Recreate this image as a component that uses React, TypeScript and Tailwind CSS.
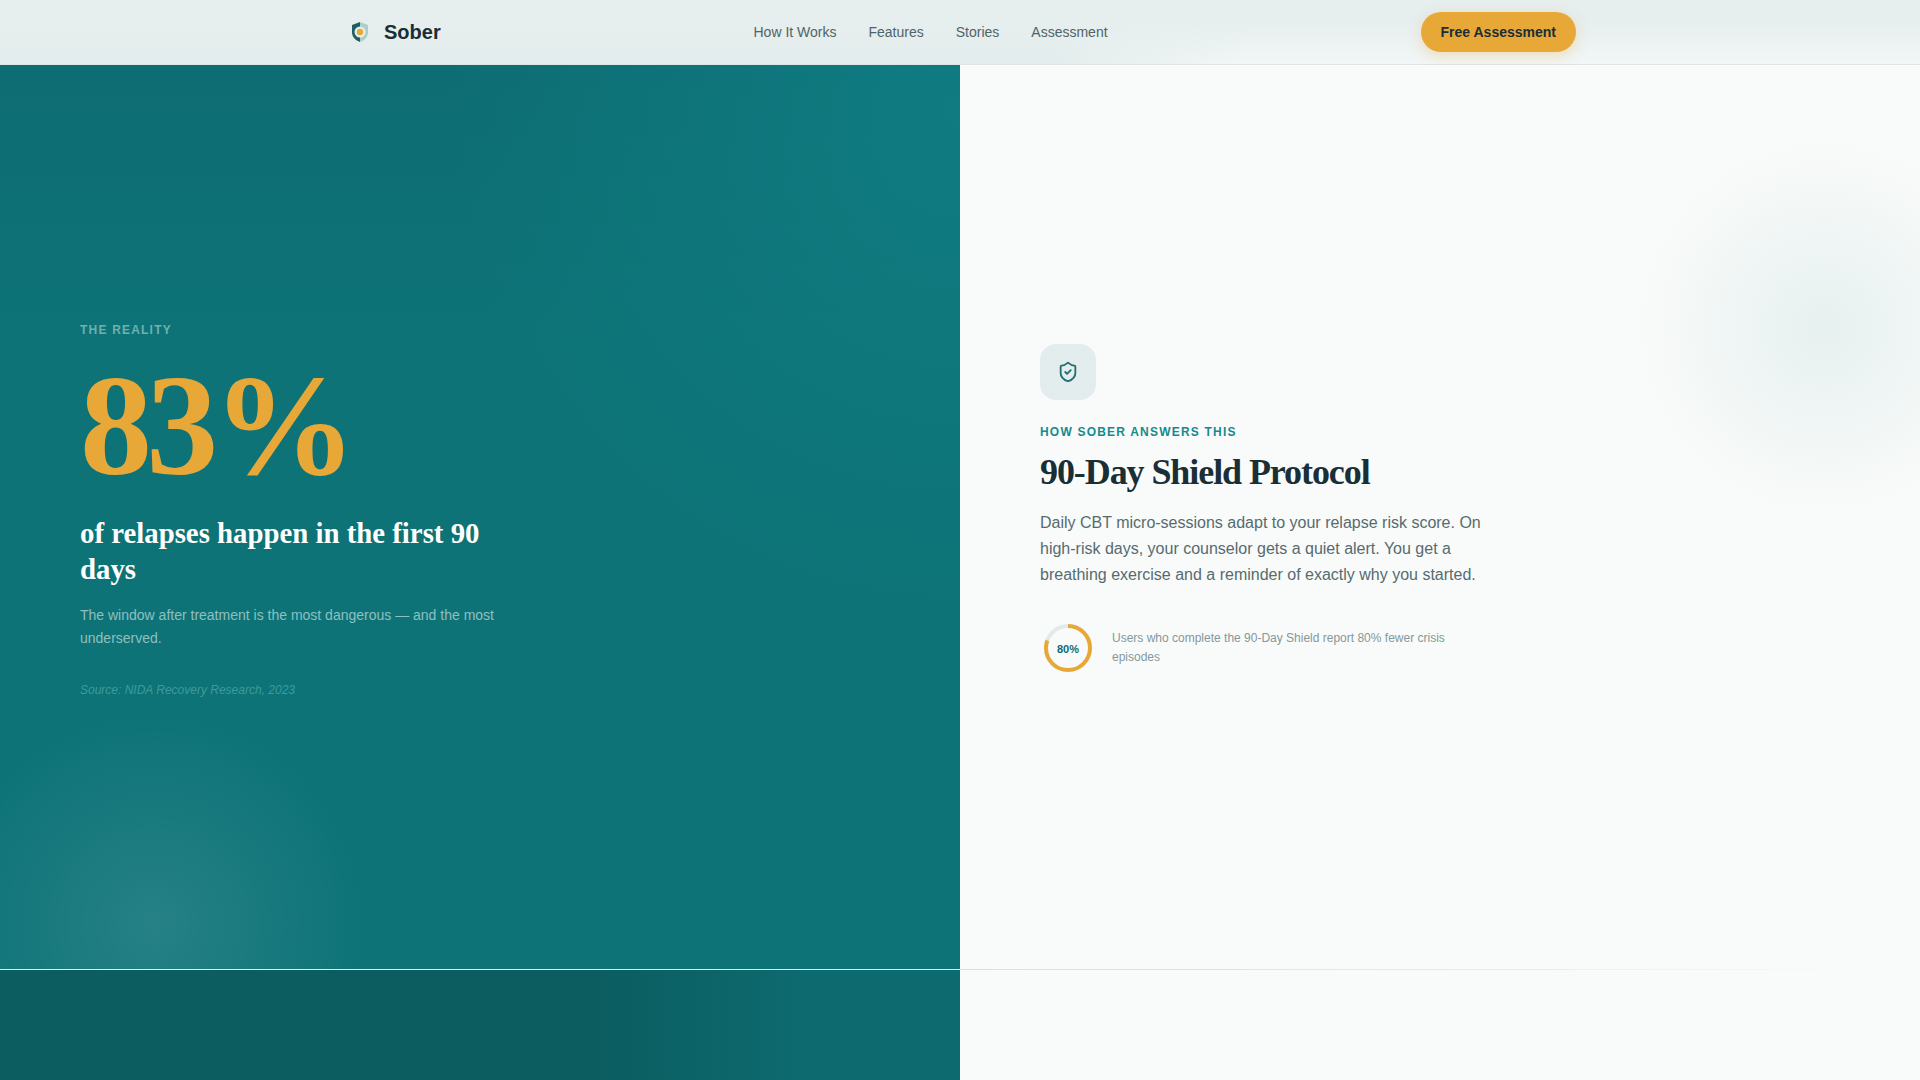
import { ShieldCheck } from "lucide-react";

const SANS = "font-['Liberation_Sans',Arial,sans-serif]";
const SERIF = "font-['Liberation_Serif','Times_New_Roman',serif]";

const links = ["How It Works", "Features", "Stories", "Assessment"];

function Logo() {
  return (
    <svg width="20" height="22" viewBox="0 0 20 22" className="shrink-0">
      <path d="M10 1 2 4v7c0 5 3.400 8.400 8 10V1Z" fill="#1f5f63" />
      <path d="M10 1l8 3v7c0 5-3.400 8.400-8 10V1Z" fill="#a9cfc6" />
      <circle cx="10" cy="11" r="5.500" fill="#e6efef" />
      <circle cx="10" cy="11" r="3.200" fill="#e8a838" />
    </svg>
  );
}

function Nav() {
  return (
    <header className="h-[65px] shrink-0 border-b border-[#dde5e5] bg-[linear-gradient(180deg,#e6eeee_30%,rgba(230,238,238,0)_100%),linear-gradient(90deg,#e4eded_55%,#f2f6f6_65%)]">
      <div className="mx-auto flex h-full w-[1280px] items-center px-6">
        <div className="flex w-[409.500px] items-center gap-[14px] pl-[6px]">
          <Logo />
          <span className="text-xl font-bold text-[#1a2e35]">Sober</span>
        </div>
        <nav className="flex flex-1 items-center gap-8">
          {links.map((link) => (
            <a key={link} className="text-sm text-[#4f6468]">
              {link}
            </a>
          ))}
        </nav>
        <button className="h-10 rounded-full bg-[#e8a838] px-5 text-sm font-bold text-[#1a2e35] shadow-[0_4px_14px_rgba(232,168,56,0.3)]">
          Free Assessment
        </button>
      </div>
    </header>
  );
}

function RealityPanel() {
  return (
    <div className="relative flex flex-col justify-center overflow-hidden bg-[#0d7377] px-20 pb-[15px]">
      <div className="absolute inset-0 bg-[radial-gradient(circle_at_100%_5%,#0f7c82_0%,rgba(15,124,130,0)_40%),linear-gradient(180deg,#0d6d72_0%,#0d7377_30%)]" />
      <div className="absolute inset-0 bg-[radial-gradient(circle_215px_at_16%_95%,rgba(255,255,255,0.1)_0%,rgba(255,255,255,0)_100%)]" />
      <div className="relative max-w-[440px]">
        <p className="text-xs font-bold tracking-[0.1em] text-[#6fb0b0]">THE REALITY</p>
        <p className={`${SERIF} mt-4 text-[144px] leading-none font-bold tracking-[-0.04em] text-[#e8a838]`}>83%</p>
        <h2 className={`${SERIF} mt-[17px] text-[28.800px] leading-9 font-bold text-white`}>
          of relapses happen in the first 90 days
        </h2>
        <p className="mt-[17px] text-sm leading-[23px] text-[#8dc0c0]">
          The window after treatment is the most dangerous — and the most underserved.
        </p>
        <p className="mt-8 text-xs italic text-[#3f9a9c]">Source: NIDA Recovery Research, 2023</p>
      </div>
    </div>
  );
}

function ProtocolPanel() {
  return (
    <div className="relative flex flex-col justify-center overflow-hidden bg-[#f9fbfa] pb-[14px] pl-20">
      <div className="absolute inset-0 bg-[radial-gradient(circle_190px_at_90%_29%,rgba(13,115,119,0.08)_0%,rgba(13,115,119,0)_100%)]" />
      <div className="relative max-w-[460px]">
        <div className="flex h-14 w-14 items-center justify-center rounded-2xl bg-[#e3eded]">
          <ShieldCheck className="h-[22px] w-[22px] text-[#1f6f73]" strokeWidth={2} />
        </div>
        <p className="mt-6 text-xs font-bold tracking-[0.1em] text-[#158a8e]">HOW SOBER ANSWERS THIS</p>
        <h2 className={`${SERIF} mt-3 text-4xl font-bold tracking-[-0.03em] text-[#1a2e35]`}>90-Day Shield Protocol</h2>
        <p className="mt-[17.500px] text-base leading-[26px] text-[#566b6f]">
          Daily CBT micro-sessions adapt to your relapse risk score. On high-risk days, your counselor gets a quiet alert. You get a breathing exercise and a reminder of exactly why you started.
        </p>
        <div className="mt-8 flex items-center gap-4">
          <div className="relative flex h-14 w-14 shrink-0 items-center justify-center">
            <svg width="48" height="48" viewBox="0 0 48 48" className="-rotate-90">
              <circle cx="24" cy="24" r="22" fill="none" stroke="#e3eaea" strokeWidth="4" />
              <circle cx="24" cy="24" r="22" fill="none" stroke="#e8a838" strokeWidth="4" strokeDasharray="110.600 138.200" />
            </svg>
            <span className="absolute mt-[3px] text-[11px] font-bold text-[#0d6b70]">80%</span>
          </div>
          <p className="max-w-[350px] text-xs leading-[19px] text-[#84989b]">
            Users who complete the 90-Day Shield report 80% fewer crisis episodes
          </p>
        </div>
      </div>
    </div>
  );
}

export default function App() {
  return (
    <div className={`${SANS} flex h-screen w-full flex-col overflow-hidden bg-[#f9fbfa]`}>
      <Nav />
      <main className="grid min-h-0 flex-1 grid-cols-2">
        <RealityPanel />
        <ProtocolPanel />
      </main>
      <div className="grid h-px shrink-0 grid-cols-2">
        <div className="bg-[#dff5f2]" />
        <div className="bg-[linear-gradient(90deg,#d9dede_0%,#e6e9e9_50%,rgba(230,233,233,0)_95%)]" />
      </div>
      <div className="grid h-[110px] shrink-0 grid-cols-2">
        <div className="bg-[linear-gradient(90deg,#0b5d60_0%,#0b5d60_62%,#0d6b70_85%,#0d6b70_100%)]" />
        <div className="bg-[#f9fbfa]" />
      </div>
    </div>
  );
}
